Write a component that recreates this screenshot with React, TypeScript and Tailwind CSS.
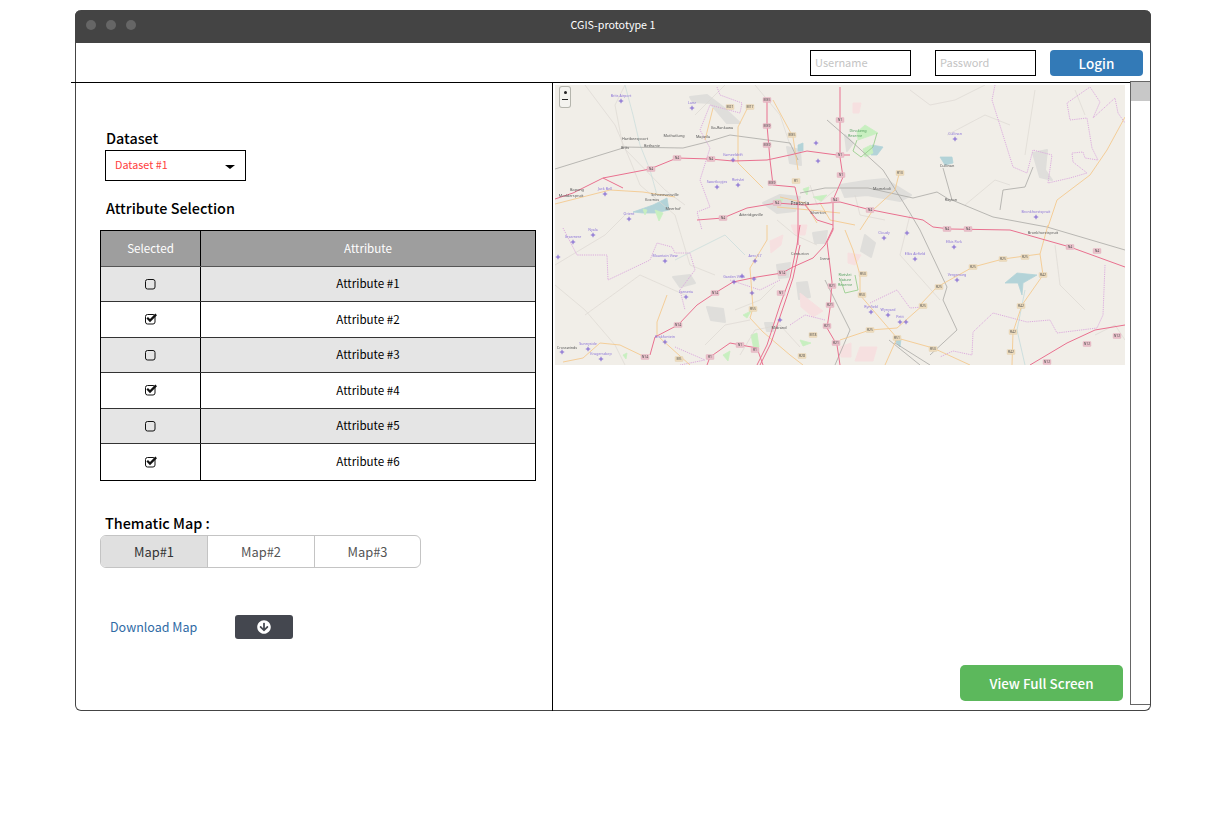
import { FaArrowCircleDown } from 'react-icons/fa'

type Pt = [number, number]

const rows = [
  { name: 'Attribute #1', checked: false },
  { name: 'Attribute #2', checked: true },
  { name: 'Attribute #3', checked: false },
  { name: 'Attribute #4', checked: true },
  { name: 'Attribute #5', checked: false },
  { name: 'Attribute #6', checked: true },
]

const toPoints = (pts: Pt[]) => pts.map((p) => p.join(',')).join(' ')

// map geometry, in px of the 570x280 tile
const urban: Pt[][] = [
  [[135, 12], [152, 10], [168, 22], [185, 38], [172, 38], [155, 18], [138, 17]],
  [[208, 118], [225, 110], [245, 112], [240, 126], [222, 128]],
  [[285, 100], [310, 96], [330, 94], [356, 110], [345, 116], [312, 110], [290, 112]],
  [[232, 62], [245, 65], [246, 80], [235, 78]],
  [[152, 222], [168, 224], [170, 237], [156, 235]],
  [[118, 192], [135, 190], [140, 198], [125, 202]],
  [[222, 180], [235, 178], [233, 192], [224, 193]],
  [[242, 198], [252, 197], [255, 212], [244, 214]],
  [[478, 68], [492, 65], [490, 85], [497, 95], [485, 92]],
  [[210, 238], [218, 238], [218, 246], [212, 246]],
  [[258, 148], [272, 146], [270, 158], [260, 158]],
  [[310, 150], [320, 158], [316, 172], [306, 166]],
  [[290, 50], [298, 58], [292, 66]],
]
const residential: Pt[][] = [
  [[298, 18], [306, 18], [304, 28], [298, 28]],
  [[215, 156], [228, 150], [226, 160], [216, 168]],
  [[236, 140], [252, 140], [250, 150], [240, 150]],
  [[293, 168], [306, 170], [300, 180], [293, 178]],
  [[285, 262], [296, 258], [296, 272], [286, 272]],
  [[245, 208], [268, 226], [258, 232], [246, 222]],
  [[305, 262], [322, 262], [318, 276], [300, 276]],
]
const water: Pt[][] = [
  [[78, 127], [98, 120], [112, 113], [114, 125], [100, 128], [88, 128]],
  [[385, 72], [397, 72], [398, 78], [390, 80]],
  [[450, 198], [462, 188], [482, 190], [468, 198], [467, 210], [463, 198]],
  [[243, 60], [248, 58], [248, 66], [243, 66]],
  [[317, 60], [328, 62], [322, 70], [316, 70]],
  [[340, 256], [346, 254], [345, 262]],
]
const green: Pt[][] = [
  [[302, 47], [310, 40], [323, 48], [303, 55]],
  [[308, 64], [316, 60], [318, 68], [310, 72]],
  [[88, 124], [92, 125], [90, 130]],
  [[100, 125], [108, 128], [104, 136]],
  [[196, 250], [202, 248], [204, 262], [199, 265]],
  [[258, 112], [272, 110], [266, 116]],
  [[168, 270], [175, 266], [173, 276]],
  [[245, 255], [256, 258], [248, 261]],
  [[220, 115], [228, 114], [226, 118]],
  [[248, 104], [254, 102], [252, 110]],
  [[188, 230], [196, 226], [192, 233]],
  [[68, 270], [72, 268], [71, 274]],
]
const redRoads: Pt[][] = [
  [[0, 114], [18, 108], [48, 93], [95, 84], [122, 73], [155, 74], [178, 76], [212, 75], [235, 70], [252, 66], [282, 70], [295, 70]],
  [[142, 135], [168, 133], [192, 123], [222, 118], [248, 120], [285, 117], [312, 124], [332, 128], [368, 135], [378, 142], [395, 144], [455, 145], [515, 162], [570, 182]],
  [[285, 2], [285, 72], [288, 92], [278, 115], [278, 145], [272, 157], [277, 197], [275, 223], [272, 243], [282, 260], [285, 280]],
  [[212, 15], [212, 40], [215, 75], [218, 100], [240, 102], [243, 115], [243, 160]],
  [[95, 270], [100, 252], [123, 240], [142, 220], [160, 208], [178, 197], [202, 192], [227, 188], [238, 182], [258, 173], [270, 160], [278, 143]],
  [[202, 280], [212, 260], [225, 220], [235, 193], [242, 160], [245, 140]],
  [[205, 280], [216, 258], [229, 220], [238, 193], [245, 160]],
  [[152, 280], [155, 272], [175, 258], [202, 263], [208, 280]],
  [[48, 93], [68, 103]],
  [[475, 280], [512, 258], [540, 245], [570, 240]],
  [[250, 120], [262, 135], [278, 140]],
]
const orangeRoads: Pt[][] = [
  [[0, 119], [55, 105], [88, 107], [120, 112]],
  [[193, 22], [183, 42], [183, 78], [208, 103]],
  [[218, 15], [238, 52], [243, 85]],
  [[158, 23], [150, 55]],
  [[112, 210], [102, 237], [102, 252]],
  [[8, 277], [28, 273], [45, 258], [65, 260], [90, 272]],
  [[105, 253], [135, 280]],
  [[212, 140], [212, 155], [195, 183], [198, 223], [195, 233], [208, 247], [235, 270], [248, 280]],
  [[365, 220], [382, 202], [418, 182], [448, 174], [485, 169], [493, 140]],
  [[485, 169], [488, 190], [467, 220], [458, 247], [457, 280]],
  [[305, 190], [305, 210], [342, 253], [378, 263], [415, 280]],
  [[285, 255], [315, 245], [342, 243], [368, 220]],
  [[330, 280], [342, 253]],
  [[570, 32], [552, 65], [535, 90], [502, 115], [493, 142]],
  [[345, 85], [340, 105], [318, 125], [305, 145]],
  [[222, 122], [255, 125], [285, 128]],
  [[225, 112], [250, 118], [262, 138]],
  [[265, 118], [275, 135], [300, 140]],
  [[290, 145], [298, 165], [305, 190]],
]
const greyRoads: Pt[][] = [
  [[0, 84], [68, 63]],
  [[68, 62], [128, 63], [152, 57], [175, 50], [235, 58], [243, 75]],
  [[295, 55], [328, 85], [355, 128], [365, 145], [392, 202], [388, 215], [402, 245], [375, 270]],
  [[388, 83], [397, 115], [438, 132], [492, 142], [570, 165]],
  [[445, 125], [448, 105], [470, 102], [478, 82]],
  [[313, 103], [358, 113], [382, 107], [395, 115]],
  [[272, 35], [295, 55]],
  [[270, 195], [295, 245], [280, 280]],
  [[340, 258], [375, 280]],
  [[334, 255], [365, 280]],
  [[245, 108], [270, 103], [313, 103]],
]
const thinRoads: Pt[][] = [
  [[30, 0], [60, 40], [75, 75], [85, 100], [120, 130], [135, 180], [160, 190]],
  [[68, 62], [60, 20], [70, 0]],
  [[68, 62], [110, 105], [130, 120]],
  [[0, 180], [50, 150], [70, 130]],
  [[0, 200], [30, 225], [60, 260], [70, 280]],
  [[30, 230], [85, 190], [130, 210]],
  [[355, 5], [375, 20], [400, 15], [430, 0]],
  [[392, 50], [430, 30], [455, 40]],
  [[480, 5], [470, 70]],
  [[520, 5], [530, 30]],
  [[410, 120], [440, 95], [455, 100]],
  [[500, 160], [505, 200], [530, 225]],
  [[540, 250], [560, 240], [570, 255]],
  [[200, 0], [225, 30], [235, 60]],
  [[170, 0], [140, 30]],
  [[355, 130], [345, 170], [385, 215]],
  [[185, 270], [200, 245], [225, 240], [245, 262]],
  [[150, 260], [170, 240], [195, 235]],
  [[222, 135], [240, 150], [262, 160]],
  [[300, 110], [305, 130], [330, 135]],
  [[255, 100], [262, 120], [280, 105]],
  [[220, 200], [205, 215], [180, 225]],
]
const boundaries: Pt[][] = [
  [[162, 2], [165, 10], [187, 18], [185, 28], [155, 20], [145, 45], [155, 63], [145, 95], [155, 122], [142, 127], [147, 145]],
  [[8, 143], [22, 170], [52, 170], [53, 195], [95, 175], [102, 158], [117, 162], [120, 168], [135, 168], [140, 185], [125, 205], [130, 225]],
  [[440, 0], [437, 15], [458, 82], [472, 88], [478, 65], [497, 70], [493, 98], [515, 93], [532, 88], [518, 77], [517, 68], [528, 67], [530, 73], [543, 75], [537, 63], [532, 33], [515, 35], [512, 18], [535, 2], [545, 17], [538, 33], [560, 13], [563, 28], [570, 38]],
  [[550, 180], [548, 230], [542, 243], [502, 248], [495, 235], [472, 237], [438, 228], [418, 247], [417, 270], [398, 266], [385, 272]],
  [[315, 218], [342, 205], [355, 223], [368, 222]],
  [[175, 195], [205, 205], [225, 195]],
  [[120, 262], [150, 275], [125, 280]],
  [[235, 240], [250, 230], [270, 235]],
]
const shields: { x: number; y: number; t: string; red: boolean }[] = [
  { x: 96, y: 84, t: 'N4', red: true }, { x: 122, y: 73, t: 'N4', red: true }, { x: 156, y: 74, t: 'N4', red: true },
  { x: 168, y: 133, t: 'N4', red: true }, { x: 222, y: 118, t: 'N4', red: true }, { x: 212, y: 15, t: 'M35', red: true },
  { x: 212, y: 41, t: 'M39', red: true }, { x: 212, y: 60, t: 'M39', red: true }, { x: 217, y: 98, t: 'M39', red: true },
  { x: 285, y: 35, t: 'N1', red: true }, { x: 285, y: 70, t: 'N1', red: true }, { x: 286, y: 90, t: 'N1', red: true },
  { x: 280, y: 115, t: 'N4', red: true }, { x: 315, y: 125, t: 'N4', red: true }, { x: 392, y: 144, t: 'N4', red: true },
  { x: 413, y: 144, t: 'N4', red: true }, { x: 515, y: 162, t: 'N4', red: true }, { x: 542, y: 166, t: 'N4', red: true },
  { x: 160, y: 208, t: 'N14', red: true }, { x: 123, y: 240, t: 'N14', red: true }, { x: 227, y: 188, t: 'N14', red: true },
  { x: 90, y: 272, t: 'N14', red: true }, { x: 226, y: 208, t: 'N1', red: true }, { x: 277, y: 201, t: 'R21', red: true },
  { x: 275, y: 220, t: 'R21', red: true }, { x: 272, y: 241, t: 'R21', red: true }, { x: 281, y: 258, t: 'R21', red: true },
  { x: 200, y: 265, t: 'R1', red: true }, { x: 155, y: 272, t: 'R1', red: true }, { x: 185, y: 260, t: 'N1', red: true },
  { x: 492, y: 277, t: 'N12', red: true }, { x: 532, y: 259, t: 'N12', red: true }, { x: 562, y: 251, t: 'N12', red: true },
  { x: 175, y: 22, t: 'M21', red: false }, { x: 195, y: 22, t: 'M17', red: false }, { x: 237, y: 50, t: 'M35', red: false },
  { x: 241, y: 96, t: 'R1', red: false }, { x: 198, y: 224, t: 'R55', red: false }, { x: 124, y: 274, t: 'M5', red: false },
  { x: 247, y: 271, t: 'R28', red: false }, { x: 258, y: 250, t: 'M18', red: false }, { x: 345, y: 88, t: 'R10', red: false },
  { x: 448, y: 174, t: 'R25', red: false }, { x: 470, y: 172, t: 'R25', red: false }, { x: 418, y: 182, t: 'R25', red: false },
  { x: 384, y: 202, t: 'R25', red: false }, { x: 368, y: 221, t: 'R25', red: false }, { x: 488, y: 190, t: 'R42', red: false },
  { x: 466, y: 221, t: 'R42', red: false }, { x: 458, y: 247, t: 'R42', red: false }, { x: 456, y: 267, t: 'R42', red: false },
  { x: 308, y: 189, t: 'R50', red: false }, { x: 307, y: 210, t: 'R50', red: false }, { x: 315, y: 245, t: 'R25', red: false },
  { x: 342, y: 253, t: 'R51', red: false }, { x: 378, y: 264, t: 'R50', red: false },
]
const airports: { x: number; y: number; t: string }[] = [
  { x: 66, y: 16, t: 'Brits Airport' }, { x: 137, y: 23, t: 'Lanz' }, { x: 178, y: 75, t: 'Kameeldrift' },
  { x: 263, y: 76, t: '' }, { x: 162, y: 102, t: 'Swartkopjes' }, { x: 183, y: 100, t: 'Rietvlei' },
  { x: 50, y: 109, t: 'Jack Bell' }, { x: 74, y: 134, t: 'Orient' }, { x: 38, y: 150, t: 'Nyala' },
  { x: 18, y: 157, t: 'Grasmere' }, { x: 3, y: 172, t: '' }, { x: 110, y: 176, t: 'Mountain View' },
  { x: 131, y: 212, t: 'Lanseria' }, { x: 179, y: 197, t: 'Garden Vista' }, { x: 187, y: 191, t: '' },
  { x: 199, y: 194, t: '' }, { x: 197, y: 208, t: '' }, { x: 200, y: 176, t: 'Aero 57' },
  { x: 225, y: 235, t: '' }, { x: 261, y: 58, t: '' }, { x: 110, y: 257, t: 'Brakfontein' },
  { x: 33, y: 264, t: 'Sunnyside' }, { x: 7, y: 267, t: '' }, { x: 46, y: 274, t: 'Krugersdorp' },
  { x: 400, y: 54, t: 'Cullinan' }, { x: 481, y: 132, t: 'Bronkhorstspruit' }, { x: 329, y: 153, t: 'Cloudy' },
  { x: 352, y: 148, t: '' }, { x: 399, y: 162, t: 'Elkis Park' }, { x: 360, y: 174, t: 'Elkis Airfield' },
  { x: 402, y: 195, t: 'Vergenoeg' }, { x: 316, y: 227, t: 'Rynfield' }, { x: 333, y: 230, t: 'Wynyard' },
  { x: 345, y: 237, t: 'Petit' }, { x: 351, y: 237, t: '' },
]
const towns: { x: number; y: number; t: string; green?: boolean }[] = [
  { x: 80, y: 55, t: 'Hartbeespoort' }, { x: 119, y: 52, t: 'Mothutlung' }, { x: 148, y: 53, t: 'Mapeila' },
  { x: 167, y: 44, t: 'Ga-Rankuwa' }, { x: 97, y: 62, t: 'Bethanie' }, { x: 70, y: 64, t: 'Brits' },
  { x: 22, y: 106, t: 'Bapong' }, { x: 16, y: 112, t: 'Modderspruit' }, { x: 110, y: 111, t: 'Schoemansville' },
  { x: 97, y: 116, t: 'Kosmos' }, { x: 118, y: 125, t: 'Meerhof' }, { x: 196, y: 131, t: 'Atteridgeville' },
  { x: 245, y: 120, t: 'Pretoria' }, { x: 245, y: 170, t: 'Centurion' }, { x: 270, y: 175, t: 'Irene' },
  { x: 224, y: 244, t: 'Midrand' }, { x: 392, y: 82, t: 'Cullinan' }, { x: 396, y: 116, t: 'Rayton' },
  { x: 327, y: 105, t: 'Mamelodi' }, { x: 488, y: 149, t: 'Bronkhorstspruit' }, { x: 263, y: 129, t: 'Silverton' },
  { x: 303, y: 47, t: 'Dinokeng', green: true }, { x: 300, y: 52, t: 'Reserve', green: true },
  { x: 290, y: 191, t: 'Rietvlei', green: true }, { x: 290, y: 196, t: 'Nature', green: true },
  { x: 290, y: 201, t: 'Reserve', green: true }, { x: 12, y: 264, t: 'Crosswinds' },
]

function MapTile() {
  return (
    <div className="relative h-[280px] w-[570px] overflow-hidden bg-[#f1eee8]">
      <svg width="570" height="280" viewBox="0 0 570 280" className="block blur-[0.4px]" fontFamily="'Noto Sans', sans-serif">
        {urban.map((p, i) => <polygon key={i} points={toPoints(p)} fill="#dfdedb" stroke="#dfdedb" strokeWidth="2" strokeLinejoin="round" />)}
        {residential.map((p, i) => <polygon key={i} points={toPoints(p)} fill="#f6e0e0" stroke="#f6e0e0" strokeWidth="1" strokeLinejoin="round" />)}
        {water.map((p, i) => <polygon key={i} points={toPoints(p)} fill="#b3d3d8" stroke="#b3d3d8" strokeWidth="0.8" strokeLinejoin="round" />)}
        {green.map((p, i) => <polygon key={i} points={toPoints(p)} fill="#c8efc0" stroke="#c8efc0" strokeWidth="0.8" strokeLinejoin="round" />)}
        {thinRoads.map((p, i) => <polyline key={i} points={toPoints(p)} fill="none" stroke="#dcd9d2" strokeWidth="0.7" />)}
        <polyline points="302,55 298,66 306,72 318,62 322,48" fill="none" stroke="#9bcf8e" strokeWidth="0.9" />
        <polyline points="300,190 303,205 290,208 286,196" fill="none" stroke="#9bcf8e" strokeWidth="0.9" />
        <polyline points="70,0 78,30 85,60 95,85 102,110" fill="none" stroke="#c0d8d8" strokeWidth="0.6" />
        <polyline points="120,175 150,160 170,150 190,170" fill="none" stroke="#c0d8d8" strokeWidth="0.6" />
        <polyline points="470,205 462,245 470,280" fill="none" stroke="#b5d5d8" strokeWidth="0.6" />
        {boundaries.map((p, i) => <polyline key={i} points={toPoints(p)} fill="none" stroke="#d9a4dc" strokeWidth="0.9" strokeDasharray="1.2 1" />)}
        {greyRoads.map((p, i) => <polyline key={i} points={toPoints(p)} fill="none" stroke="#aaa8a4" strokeWidth="0.8" />)}
        {orangeRoads.map((p, i) => <polyline key={i} points={toPoints(p)} fill="none" stroke="#f4c98e" strokeWidth="0.9" />)}
        {redRoads.map((p, i) => <polyline key={i} points={toPoints(p)} fill="none" stroke="#e9708f" strokeWidth="1" />)}
        {shields.map((s, i) => (
          <g key={i}>
            <rect x={s.x - 4} y={s.y - 2.5} width="8" height="5" rx="0.8" fill={s.red ? '#e9bfc9' : '#eedcbd'} stroke={s.red ? '#dca0b0' : '#dcc8a0'} strokeWidth="0.3" />
            <text x={s.x} y={s.y + 1.2} textAnchor="middle" fontSize="3.4" fill="#555">{s.t}</text>
          </g>
        ))}
        {airports.map((a, i) => (
          <g key={i}>
            <path d={`M${a.x - 2.2} ${a.y}H${a.x + 2.2}M${a.x} ${a.y - 2.2}V${a.y + 2.2}`} stroke="#7458d0" strokeWidth="0.9" />
            {a.t && <text x={a.x} y={a.y - 4} textAnchor="middle" fontSize="3.6" fill="#8a72d8">{a.t}</text>}
          </g>
        ))}
        {towns.map((t, i) => (
          <text key={i} x={t.x} y={t.y} textAnchor="middle" fontSize={t.t === 'Pretoria' ? 5 : 3.8} fill={t.green ? '#55a060' : '#555'}>{t.t}</text>
        ))}
      </svg>
      <div className="absolute left-[4px] top-[1px] flex h-[22px] w-[12px] flex-col items-center rounded-[3px] bg-[#b5b5ad] p-[1px]">
        <div className="flex h-full w-full flex-col items-center rounded-[2px] bg-[#f4f3ef]">
          <span className="mt-[4px] h-[3px] w-[3px] rounded-full bg-[#222]" />
          <span className="mt-[5px] h-[1px] w-[6px] bg-[#222]" />
        </div>
      </div>
    </div>
  )
}

function CheckIcon({ checked }: { checked: boolean }) {
  return (
    <svg width="14" height="12" viewBox="0 0 14 12" className="block">
      <rect x="1.5" y="1.5" width="9.5" height="9.5" rx="2" fill="none" stroke="#111" strokeWidth="1" />
      {checked && <path d="M3.2 4.8 L6 7.6 L12.2 1.4" fill="none" stroke="#111" strokeWidth="2.2" />}
    </svg>
  )
}

export default function App() {
  return (
    <div className="h-[833px] w-[1211px] bg-white pl-[75px] pt-[10px] font-['Noto_Sans_CJK_SC',sans-serif]">
      <div className="relative flex h-[701px] w-[1076px] flex-col rounded-[6px] border border-[#444] border-t-0 bg-white">
        {/* Title bar */}
        <div className="relative -mx-px flex h-[33px] items-center rounded-t-[6px] bg-[#444] pl-[11px]">
          <div className="-mt-[3px] flex gap-[10px]">
            <span className="h-[10px] w-[10px] rounded-full bg-[#666]" />
            <span className="h-[10px] w-[10px] rounded-full bg-[#666]" />
            <span className="h-[10px] w-[10px] rounded-full bg-[#666]" />
          </div>
          <span className="absolute inset-x-0 -mt-[2px] text-center text-[10.7px] text-white">CGIS-prototype 1</span>
        </div>

        {/* Login row */}
        <div className="relative flex h-[40px] items-start justify-end border-b border-black pr-[7px] pt-[7px]">
          <div className="flex h-[26px] w-[101px] items-center border border-black pb-[2px] pl-[4px] text-[11px] text-[#c4c4c4]">Username</div>
          <div className="ml-[24px] flex h-[26px] w-[101px] items-center border border-black pb-[2px] pl-[4px] text-[11px] text-[#c4c4c4]">Password</div>
          <button className="ml-[14px] h-[26px] w-[93px] rounded-[4px] bg-[#337ab7] text-[13.5px] font-medium text-white">Login</button>
          <span className="absolute -left-[5px] -bottom-px h-px w-[5px] bg-black" />
        </div>

        <div className="flex min-h-0 flex-1">
          {/* Left panel */}
          <div className="-mb-px w-[477px] shrink-0 border-r border-black pl-[24px]">
            <div className="ml-[6px] mt-[46px] text-[14.4px] font-medium leading-[18px] text-black">Dataset</div>
            <div className="ml-[5px] mt-[3px] flex h-[31px] w-[141px] items-center justify-between border border-black pl-[9px] pr-[10px]">
              <span className="-mt-[2px] text-[10.8px] text-[#ff4040]">Dataset #1</span>
              <span className="mt-[3px] h-0 w-0 border-x-[5px] border-t-[4px] border-x-transparent border-t-black" />
            </div>
            <div className="ml-[6px] mt-[18px] text-[14.4px] font-medium leading-[18px] text-black">Attribute Selection</div>

            <div className="mt-[13px] w-[436px] border border-black">
              <div className="flex h-[35.5px] border-b border-[#555] bg-[#9e9e9e] text-[11.6px] text-white">
                <div className="flex w-[100px] items-center justify-center border-r border-black">Selected</div>
                <div className="flex flex-1 items-center justify-center">Attribute</div>
              </div>
              {rows.map((row, i) => (
                <div key={row.name} className={`flex text-[11.6px] text-black ${i % 2 === 0 ? 'bg-[#e5e5e5]' : 'bg-white'} ${i < rows.length - 1 ? 'h-[35.5px] border-b border-[#333]' : 'h-[36px]'}`}>
                  <div className="flex w-[100px] items-center justify-center border-r border-black">
                    <CheckIcon checked={row.checked} />
                  </div>
                  <div className="flex flex-1 items-center justify-center">{row.name}</div>
                </div>
              ))}
            </div>

            <div className="ml-[5px] mt-[33px] text-[14.4px] font-medium leading-[18px] text-black">Thematic Map :</div>
            <div className="mt-[3px] flex h-[33px] w-[321px] overflow-hidden rounded-[6px] border border-[#c4c4c4] text-[12.9px]">
              <div className="flex w-[106px] items-center justify-center bg-[#e0e0e0] text-[#333]">Map#1</div>
              <div className="flex w-[107px] items-center justify-center border-l border-[#c4c4c4] text-[#555]">Map#2</div>
              <div className="flex flex-1 items-center justify-center border-l border-[#c4c4c4] text-[#555]">Map#3</div>
            </div>

            <div className="mt-[47px] flex h-[24px] items-center pl-[10px]">
              <span className="w-[125px] text-[12.5px] text-[#2f6ba5]">Download Map</span>
              <button className="flex h-[24px] w-[58px] items-center justify-center rounded-[3px] bg-[#44474f] text-white">
                <FaArrowCircleDown className="h-[14px] w-[14px]" />
              </button>
            </div>
          </div>

          {/* Map panel */}
          <div className="flex min-w-0 flex-1 flex-col justify-between pb-[9px] pl-[2px] pr-[7px] pt-[2px]">
            <MapTile />
            <button className="h-[36px] w-[163px] self-end rounded-[5px] bg-[#5cb85c] text-[13.4px] font-medium text-white">View Full Screen</button>
          </div>

          {/* Scrollbar */}
          <div className="relative z-10 -mt-[2px] mb-[5px] w-[20px] shrink-0 border border-r-0 border-[#666] bg-white">
            <div className="h-[19px] bg-[#c8c8c8]" />
          </div>
        </div>
      </div>
    </div>
  )
}
